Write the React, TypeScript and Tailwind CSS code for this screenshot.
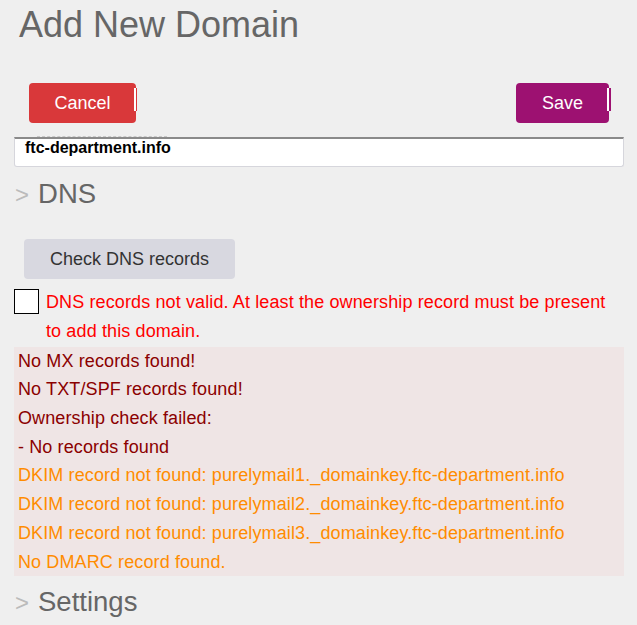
export default function App() {
  const dnsErrors = [
    'No MX records found!',
    'No TXT/SPF records found!',
    'Ownership check failed:',
    '- No records found',
  ]
  const dnsWarnings = [
    'DKIM record not found: purelymail1._domainkey.ftc-department.info',
    'DKIM record not found: purelymail2._domainkey.ftc-department.info',
    'DKIM record not found: purelymail3._domainkey.ftc-department.info',
    'No DMARC record found.',
  ]

  return (
    <div className="min-h-screen bg-[#efefef] pl-[14px] pr-[13px] font-['Liberation_Sans',Arial,sans-serif]">
      <h1 className="pt-[7px] pl-[5px] text-[36px] leading-[36px] font-normal text-[#666]">Add New Domain</h1>

      {/* actions */}
      <div className="mt-[40px] flex justify-between px-[15px]">
        <button className="relative flex h-[40px] w-[107px] items-center justify-center rounded-[4px] bg-[#d9383a] text-[18px] text-white">
          Cancel
          <span className="absolute top-[5px] right-[-1px] h-[23px] w-[3px] border-l-2 border-white bg-[#d9383a]" />
        </button>
        <button className="relative flex h-[40px] w-[93px] items-center justify-center rounded-[4px] bg-[#9d1171] text-[18px] text-white">
          Save
          <span className="absolute top-[5px] right-[-2px] h-[23px] w-[4px] border-l-2 border-white bg-[#9d1171]" />
        </button>
      </div>

      {/* domain field */}
      <div className="relative mt-[14px] h-[30px] rounded-b-[3px] border-x border-b border-t-2 border-[#d6d6dc] border-t-[#8a8a8a] bg-white pl-[10px] text-[16px] leading-[18px] font-bold text-black">
        <span className="absolute top-[-3px] left-[22px] w-[130px] border-t border-dashed border-[#c8c8c8]" />
        ftc-department.info
      </div>

      {/* DNS section */}
      <div className="mt-[12px] flex items-baseline">
        <span className="ml-[1px] text-[24px] leading-[30px] text-[#bbb]">&gt;</span>
        <span className="ml-[9px] text-[27.5px] leading-[30px] text-[#666]">DNS</span>
      </div>

      <button className="mt-[29px] ml-[10px] h-[40px] w-[211px] rounded-[4px] bg-[#d8d8e0] text-[18px] text-[#333]">
        Check DNS records
      </button>

      <div className="mt-[9px] flex gap-[7px]">
        <div className="mt-[1px] h-[25px] w-[25px] shrink-0 border border-black bg-white" />
        <p className="text-[18px] leading-[28.8px] tracking-[0.12px] text-[#ff0000]">
          DNS records not valid. At least the ownership record must be present
          <br />
          to add this domain.
        </p>
      </div>

      <div className="mt-[1px] bg-[#efe5e5] pl-[4px] text-[18px] leading-[28.7px] tracking-[0.12px]">
        {dnsErrors.map((line) => (
          <div key={line} className="text-[#8b0000]">{line}</div>
        ))}
        {dnsWarnings.map((line) => (
          <div key={line} className="text-[#ff8c00]">{line}</div>
        ))}
      </div>

      {/* Settings section */}
      <div className="mt-[11px] flex items-baseline">
        <span className="ml-[1px] text-[24px] leading-[30px] text-[#bbb]">&gt;</span>
        <span className="ml-[9px] text-[27.5px] leading-[30px] text-[#666]">Settings</span>
      </div>
    </div>
  )
}
